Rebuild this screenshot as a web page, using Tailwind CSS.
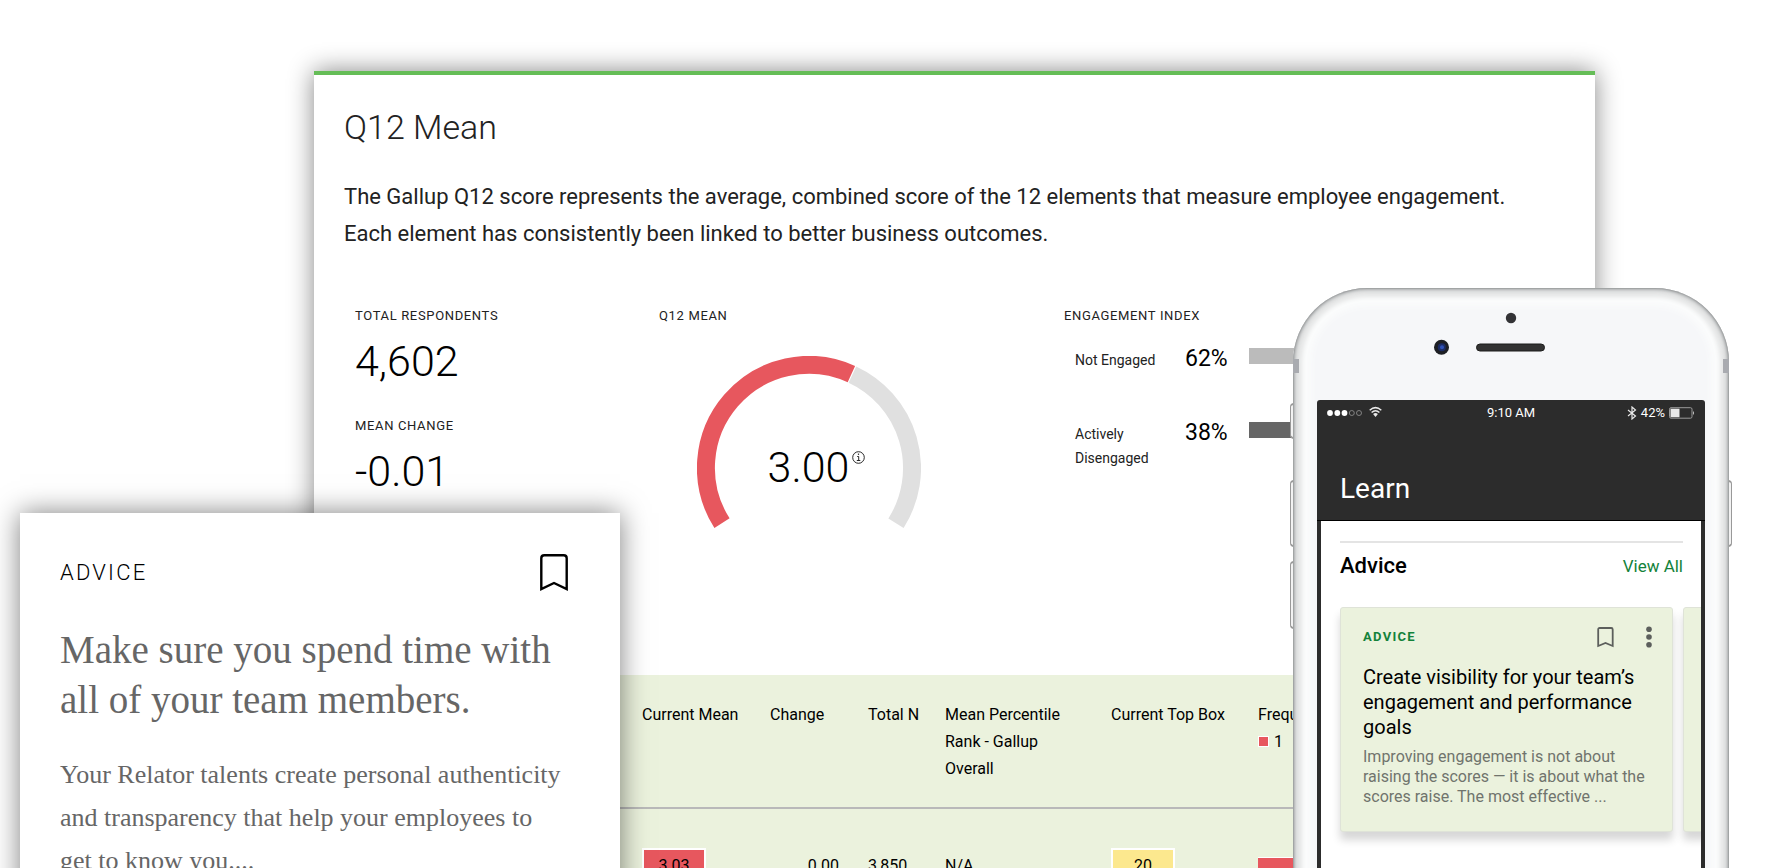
<!DOCTYPE html>
<html lang="en">
<head>
<meta charset="utf-8">
<meta name="viewport" content="width=device-width, initial-scale=1">
<title>Q12 Mean</title>
<script src="https://cdn.jsdelivr.net/npm/@tailwindcss/browser@4"></script>
</head>
<body class="bg-white font-['Roboto',sans-serif] text-black">
<main class="relative flex h-screen overflow-hidden pt-[71px] pr-[171px] pl-[314px]">

  <!-- Dashboard report -->
  <article class="min-w-0 flex-1 border-t-4 border-[#65bd57] bg-white pt-8 shadow-[0_0_24px_rgba(0,0,0,0.48)]">
    <header class="px-[30px]">
      <h1 class="text-[34px] leading-10 font-light text-[#222]">Q12 Mean</h1>
      <p class="mt-[31px] max-w-[1180px] text-[22px] leading-[37px] text-[#222]">The Gallup Q12 score represents the average, combined score of the 12 elements that measure employee engagement. Each element has consistently been linked to better business outcomes.</p>
    </header>

    <section class="mt-[54px] grid grid-cols-[304px_405px_1fr] pl-[41px]">
      <dl>
        <dt class="text-[13px] leading-5 tracking-wider text-[#222] uppercase">Total Respondents</dt>
        <dd class="mt-[10px] text-[43px] leading-[50px] font-light">4,602</dd>
        <dt class="mt-[30px] text-[13px] leading-5 tracking-wider text-[#222] uppercase">Mean Change</dt>
        <dd class="mt-[10px] text-[43px] leading-[50px] font-light">-0.01</dd>
      </dl>

      <div>
        <h2 class="text-[13px] leading-5 tracking-wider text-[#222] uppercase">Q12 Mean</h2>
        <div class="relative mt-[30px] ml-[38px] w-[224px]">
          <svg class="block" width="224" height="174" viewBox="0 0 224 174" fill="none" stroke-width="18" aria-hidden="true">
            <path d="M25 167.200A103 103 0 0 1 154.400 18.100" stroke="#e7575e"/>
            <path d="M155.400 18.600A103 103 0 0 1 199 167.200" stroke="#e0e0e0"/>
          </svg>
          <div class="absolute inset-x-0 top-[86px] flex items-start justify-center pl-[15px]">
            <span class="text-[43px] leading-[50px] font-light">3.00</span>
            <button type="button" aria-label="About Q12 Mean" class="mt-[9px] ml-[3px]">
              <svg class="block" width="13" height="13" viewBox="0 0 13 13" fill="none" stroke="#111"><circle cx="6.500" cy="6.500" r="5.800" stroke-width=".9"/><path d="M5.200 5.500H6.700V9.300M4.800 9.500H8.300" stroke-width=".9"/><path d="M5.900 3.200H7.100" stroke-width="1.200"/></svg>
            </button>
          </div>
        </div>
      </div>

      <div>
        <h2 class="text-[13px] leading-5 tracking-wider text-[#222] uppercase">Engagement Index</h2>
        <div class="mt-[19px] flex items-start pl-[11px]">
          <span class="w-[110px] pt-[3px] text-[14px] leading-6 text-[#222]">Not Engaged</span>
          <span class="w-16 text-[23px] leading-7">62%</span>
          <span class="mt-[3px] h-4 flex-1 bg-[#bbb]"></span>
        </div>
        <div class="mt-[46px] flex items-start pl-[11px]">
          <span class="w-[110px] pt-[3px] text-[14px] leading-6 text-[#222]">Actively<br>Disengaged</span>
          <span class="w-16 text-[23px] leading-7">38%</span>
          <span class="mt-[3px] h-4 w-[140px] bg-[#666]"></span>
        </div>
      </div>
    </section>

    <table class="mt-[145px] w-full table-fixed bg-[#ebf2dd] text-left text-[16px]">
      <colgroup><col class="w-[328px]"><col class="w-[128px]"><col class="w-[98px]"><col class="w-[77px]"><col class="w-[166px]"><col class="w-[147px]"><col></colgroup>
      <thead>
        <tr class="h-[133px] border-b-2 border-[#b9b9b9] align-top leading-[27px]">
          <td></td>
          <th scope="col" class="pt-[26px] font-normal">Current Mean</th>
          <th scope="col" class="pt-[26px] font-normal">Change</th>
          <th scope="col" class="pt-[26px] font-normal">Total N</th>
          <th scope="col" class="pt-[26px] pr-8 font-normal">Mean Percentile Rank - Gallup Overall</th>
          <th scope="col" class="pt-[26px] font-normal">Current Top Box</th>
          <th scope="col" class="pt-[26px] font-normal">Frequency
            <span class="flex items-center gap-[5px]"><span class="size-[11px] border border-white bg-[#e7575e]"></span>1</span>
          </th>
        </tr>
      </thead>
      <tbody>
        <tr class="h-[120px] align-top leading-9">
          <td></td>
          <td class="pt-[39px]"><span class="block w-16 border-2 border-white bg-[#e7575e] text-center leading-8">3.03</span></td>
          <td class="pt-[39px] pr-[29px] text-right">0.00</td>
          <td class="pt-[39px]">3,850</td>
          <td class="pt-[39px]">N/A</td>
          <td class="pt-[39px]"><span class="block w-16 border-2 border-white bg-[#fce88e] text-center leading-8">20</span></td>
          <td class="pt-12"><span class="block h-5 w-[200px] border-t border-white bg-[#e7575e]"></span></td>
        </tr>
      </tbody>
    </table>
  </article>

  <!-- Advice card -->
  <article class="absolute top-[513px] left-5 w-[600px] bg-white pt-[41px] pr-[52px] pb-10 pl-10 shadow-[0_0_26px_rgba(0,0,0,0.5)]">
    <div class="flex items-center justify-between">
      <p class="text-[22px] leading-9 font-light tracking-widest uppercase">Advice</p>
      <button type="button" aria-label="Bookmark">
        <svg class="block" width="28" height="37" viewBox="0 0 28 37" fill="none" stroke="#000" stroke-width="2.400"><path d="M1.300 35V4.300Q1.300 1.300 4.300 1.300H23.700Q26.700 1.300 26.700 4.300V35L14 29Z"/></svg>
      </button>
    </div>
    <h2 class="mt-[34px] font-['Liberation_Serif',serif] text-[39px] leading-[50px] text-[#666]">Make sure you spend time with all of your team members.</h2>
    <p class="mt-7 max-w-[504px] font-['Liberation_Serif',serif] text-[26px] leading-[43px] text-[#666]">Your Relator talents create personal authenticity and transparency that help your employees to get to know you....</p>
  </article>

  <!-- Phone -->
  <div class="absolute top-[288px] right-[37px] w-[436px]">
    <span class="absolute top-[115px] -left-[3px] h-9 w-1 rounded-l-sm border border-y-2 border-[#999] bg-[#f2f2f2]"></span>
    <span class="absolute top-[192px] -left-[3px] h-[67px] w-1 rounded-l-sm border border-y-2 border-[#999] bg-[#f2f2f2]"></span>
    <span class="absolute top-[273px] -left-[3px] h-[68px] w-1 rounded-l-sm border border-y-2 border-[#999] bg-[#f2f2f2]"></span>
    <span class="absolute top-[192px] -right-[3px] h-[67px] w-1 rounded-r-sm border border-y-2 border-[#999] bg-[#f2f2f2]"></span>

    <div class="relative rounded-t-[74px] bg-[#f6f7f9] px-6 shadow-[inset_0_0_2px_1px_#969899,inset_0_0_3px_3px_#c6c8c9,inset_0_0_4px_9px_#e5e6e6,inset_0_0_6px_18px_#fbfcfc]">
      <span class="absolute top-[71px] left-0 h-[14px] w-[6px] bg-[#a9abb0]"></span>
      <span class="absolute top-[71px] right-0 h-[14px] w-[6px] bg-[#a9abb0]"></span>
      <svg class="mx-auto block" width="388" height="112" viewBox="0 0 388 112" aria-hidden="true">
        <circle cx="194" cy="30" r="5.200" fill="#333336"/>
        <circle cx="124.500" cy="59.300" r="7.500" fill="#1d1f24"/>
        <circle cx="124.800" cy="59.300" r="4" fill="#1c2c66"/>
        <circle cx="125" cy="59.300" r="2" fill="#2f51b5"/>
        <rect x="159.500" y="56" width="68" height="7" rx="3.500" fill="#333" stroke="#1c1c1c"/>
      </svg>

      <div class="h-[500px] overflow-hidden rounded-t-[3px] bg-[#2c2c2c] text-white">
        <div class="grid h-[25px] grid-cols-3 items-center px-[10px] text-[13px]">
          <svg class="block" width="56" height="14" viewBox="0 0 56 14" aria-label="Signal and Wi-Fi">
            <g fill="#fff"><circle cx="3" cy="7" r="2.900"/><circle cx="10.300" cy="7" r="2.900"/><circle cx="17.500" cy="7" r="2.900"/></g>
            <g fill="none" stroke="#8a8a8a" stroke-width=".9"><circle cx="24.800" cy="7" r="2.500"/><circle cx="32" cy="7" r="2.500"/></g>
            <g fill="none" stroke="#e8e8e8" stroke-width="1.500"><path d="M42.700 4.200Q48.500-1 54.300 4.200"/><path d="M44.600 6.500Q48.500 3 52.400 6.500"/></g>
            <path d="M46.100 8.100Q48.500 6 50.900 8.100L48.500 10.900Z" fill="#e8e8e8"/>
          </svg>
          <span class="text-center">9:10 AM</span>
          <span class="flex items-center justify-end">
            <svg width="10" height="14" viewBox="0 0 10 14" fill="none" stroke="#e8e8e8" stroke-width="1.200" aria-label="Bluetooth"><path d="M1 4L8.500 10L5 13V1L8.500 4L1 10"/></svg>
            <span class="mx-1">42%</span>
            <svg width="26" height="12" viewBox="0 0 26 12" aria-label="Battery"><rect x=".5" y=".7" width="22.500" height="10.500" rx="1.500" fill="none" stroke="#9a9a9a"/><rect x="1.500" y="1.700" width="9" height="8.500" fill="#e8e8e8"/><path d="M24 4Q26 6 24 8Z" fill="#ccc"/></svg>
          </span>
        </div>
        <h2 class="mt-[46px] border-b border-black pb-[13px] pl-[23px] text-[28px] leading-9">Learn</h2>

        <div class="mx-1 h-[379px] overflow-hidden bg-white pt-5 pl-[19px] text-black">
          <div class="mr-[18px] flex items-center justify-between border-t-2 border-[#e4e4e4] pt-[9px]">
            <h3 class="text-[22px] leading-7 font-medium">Advice</h3>
            <a href="#" class="text-[17px] leading-7 text-[#13823a]">View All</a>
          </div>
          <div class="mt-[27px] flex gap-[10px]">
            <article class="w-[333px] shrink-0 rounded-[3px] border border-[#dfe3d8] bg-[#ebf2dd] pt-[17px] pr-5 pb-6 pl-[22px] shadow-[0_8px_8px_rgba(0,0,0,0.16)]">
              <div class="flex h-6 items-center">
                <p class="flex-1 text-[13px] font-bold tracking-widest text-[#13823a] uppercase">Advice</p>
                <button type="button" aria-label="Bookmark">
                  <svg class="block" width="17" height="21" viewBox="0 0 17 21" fill="none" stroke="#5c5f5c" stroke-width="1.800"><path d="M1.200 19V2.500Q1.200 1 2.700 1H14.200Q15.700 1 15.700 2.500V19L8.500 16Z"/></svg>
                </button>
                <button type="button" aria-label="More" class="ml-8">
                  <svg class="block" width="6" height="22" viewBox="0 0 6 22" fill="#5c5f5c"><circle cx="3" cy="3.300" r="2.800"/><circle cx="3" cy="11" r="2.800"/><circle cx="3" cy="18.700" r="2.800"/></svg>
                </button>
              </div>
              <h4 class="mt-4 text-[20px] leading-[25px]">Create visibility for your team’s engagement and performance goals</h4>
              <p class="mt-[7px] text-[16px] leading-5 text-[#70746d]">Improving engagement is not about raising the scores — it is about what the scores raise. The most effective ...</p>
            </article>
            <article class="w-[332px] shrink-0 rounded-[3px] border border-[#dfe3d8] bg-[#ebf2dd] shadow-[0_8px_8px_rgba(0,0,0,0.16)]"></article>
          </div>
        </div>
      </div>
    </div>
  </div>
</main>
</body>
</html>
